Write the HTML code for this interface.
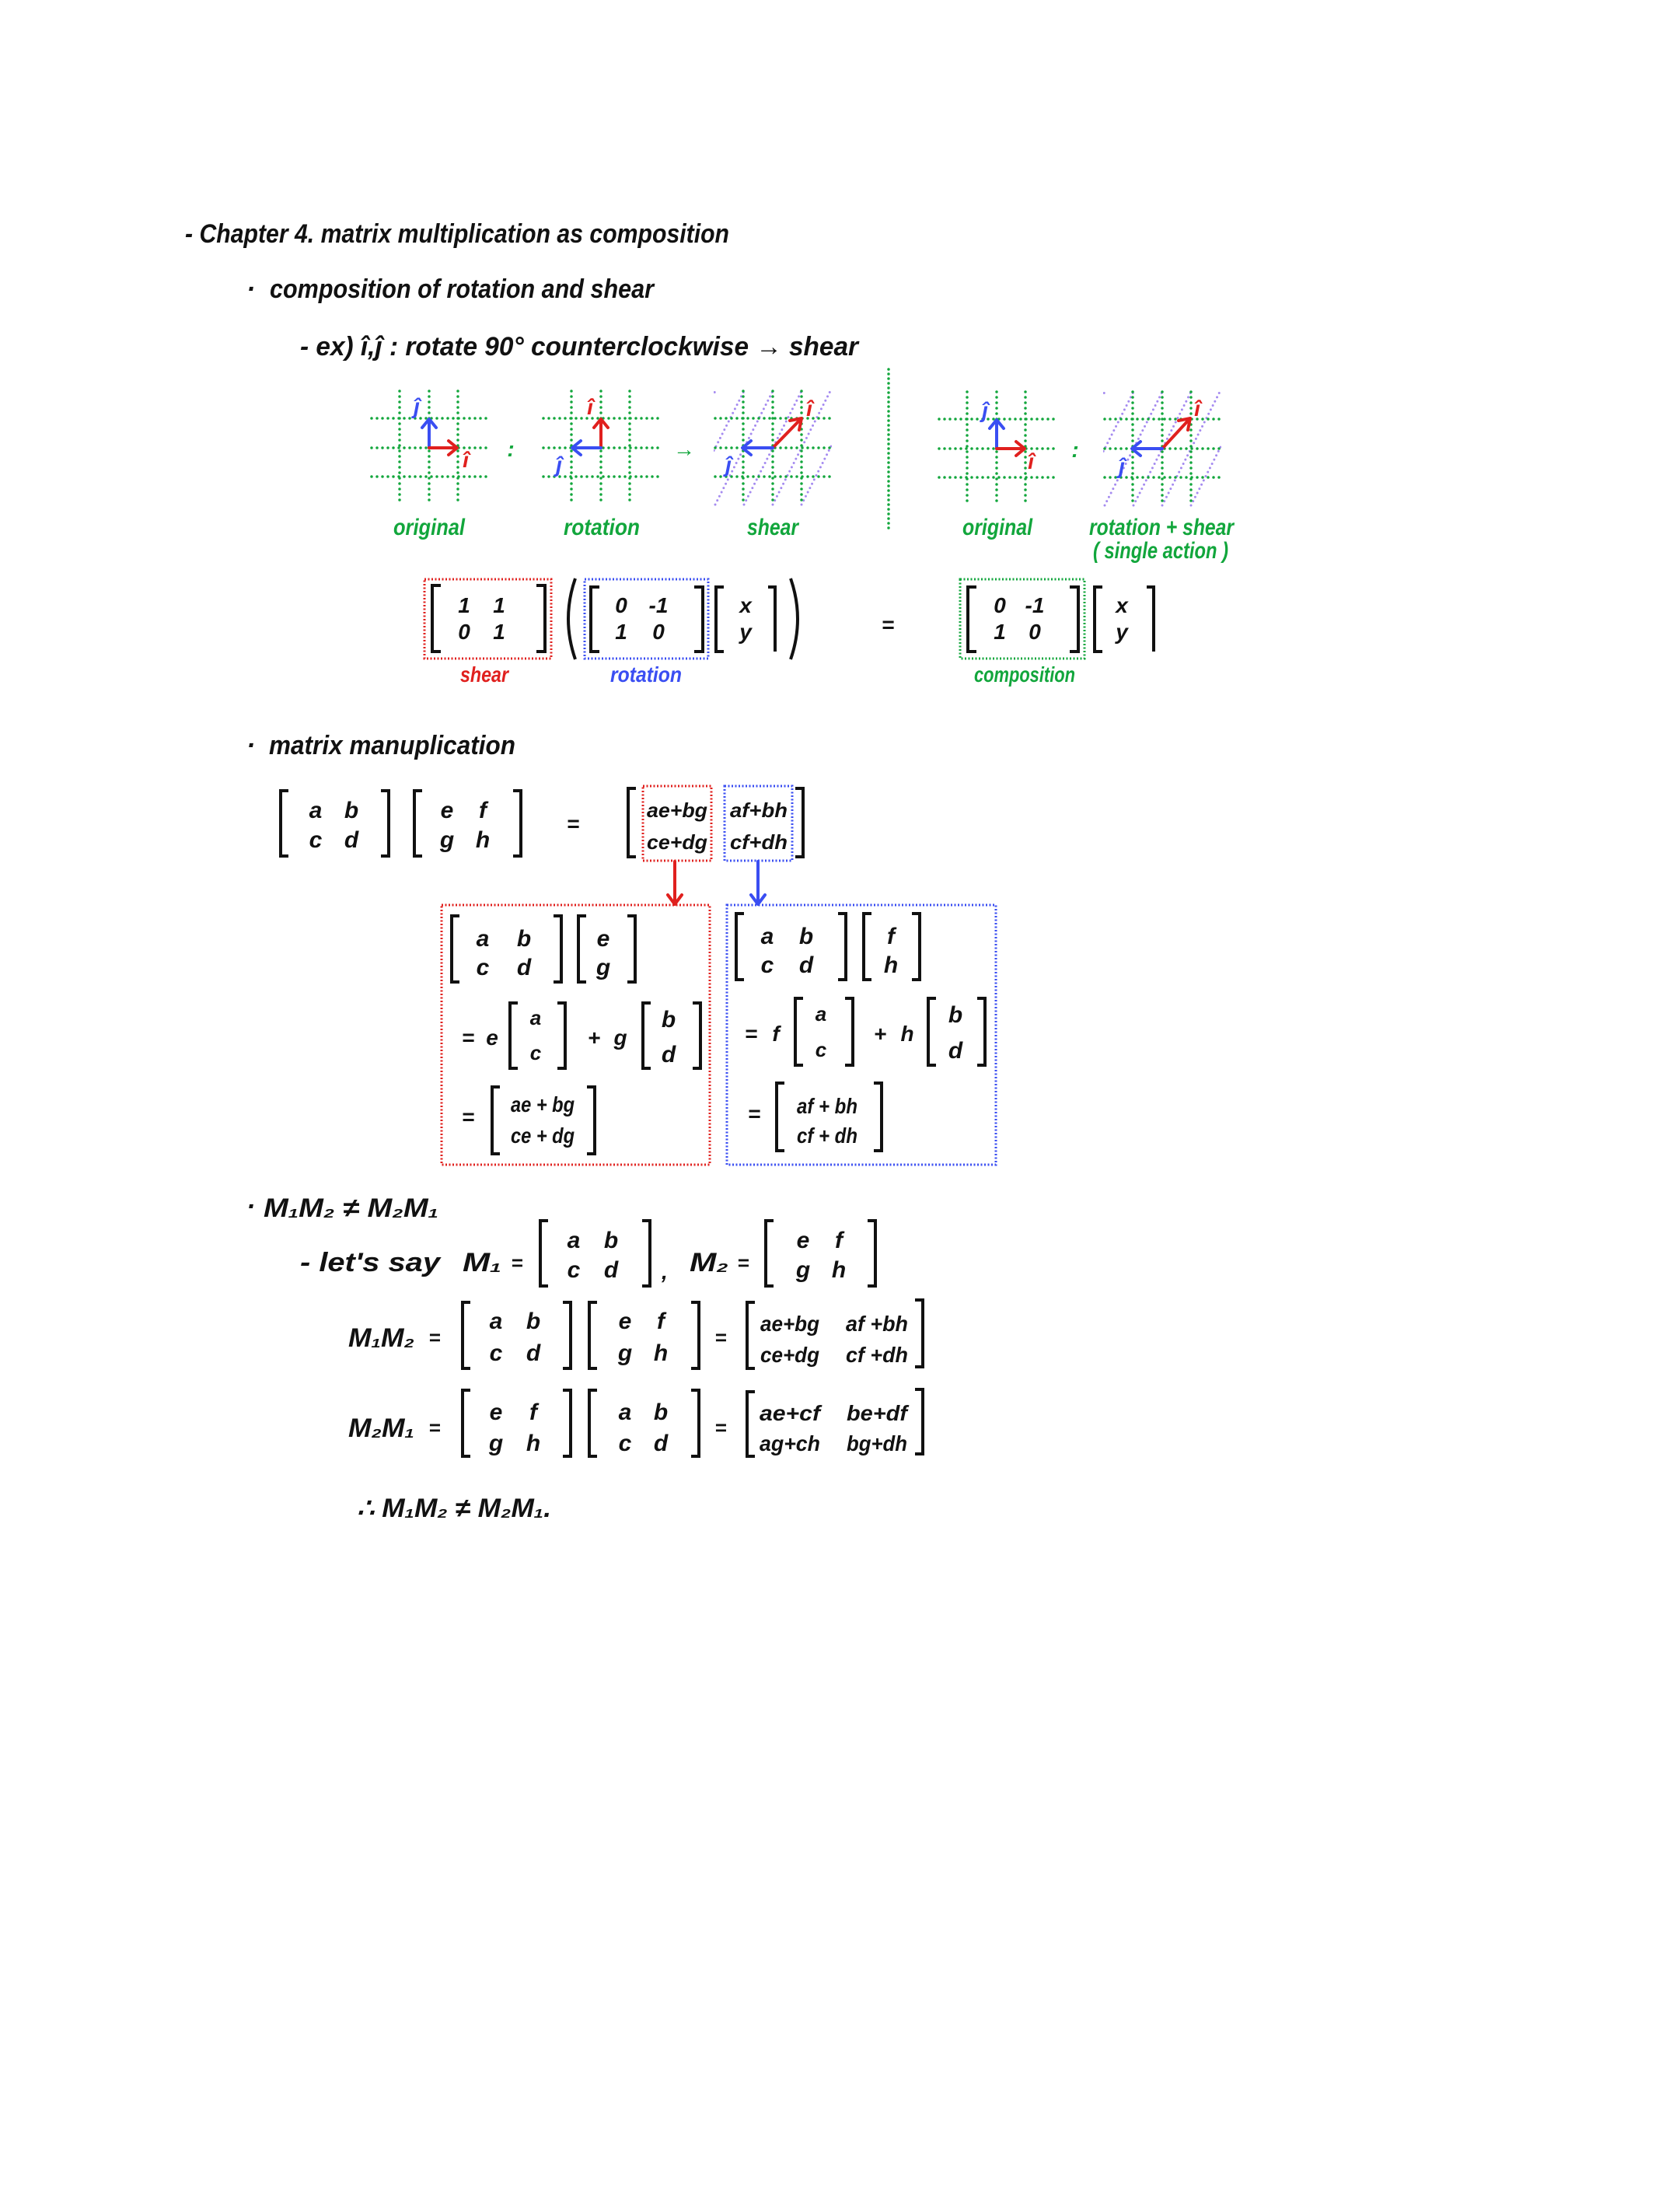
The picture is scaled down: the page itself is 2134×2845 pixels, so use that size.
<!DOCTYPE html>
<html><head><meta charset="utf-8"><style>
html,body{margin:0;padding:0;background:#fff}
svg{display:block}
text{font-family:"Liberation Sans",sans-serif;font-style:italic;font-weight:bold}
.k{fill:#111}
.g{fill:#12a63c}.r{fill:#e0201e}.b{fill:#3a4ef2}
.br{fill:none;stroke:#111;stroke-width:4;stroke-linejoin:miter}
.gl{stroke:#12a63c;stroke-width:3.5;stroke-linecap:round;stroke-dasharray:0 7;fill:none}
.pl{stroke:#a58bf0;stroke-width:3;stroke-linecap:round;stroke-dasharray:0 6;fill:none}
.dr{fill:none;stroke:#e0201e;stroke-width:3;stroke-dasharray:2 2.5}
.db{fill:none;stroke:#3a4ef2;stroke-width:3;stroke-dasharray:2 2.5}
.dg{fill:none;stroke:#12a63c;stroke-width:3;stroke-dasharray:2 2.5}
.ar{fill:none;stroke:#e0201e;stroke-width:4;stroke-linecap:round;stroke-linejoin:round}
.ab{fill:none;stroke:#3a4ef2;stroke-width:4;stroke-linecap:round;stroke-linejoin:round}
</style></head><body>
<svg width="2134" height="2845" viewBox="0 0 2134 2845" xmlns="http://www.w3.org/2000/svg">
<defs>
<g id="grid">
<path class="gl" d="M-38 -73V73M0 -73V73M37 -73V73M-74 -38H74M-74 0H74M-74 37H74"/>
</g>
<clipPath id="cp"><rect x="-76" y="-75" width="152" height="150"/></clipPath>
<g id="diag" clip-path="url(#cp)">
<path class="pl" d="M-148 73L-74 -73M-111 73L-37 -73M-74 73L0 -73M-37 73L37 -73M0 73L74 -73M37 73L111 -73"/>
</g>
</defs>

<!-- header text -->
<text class="k" x="238" y="312" font-size="34" textLength="700" lengthAdjust="spacingAndGlyphs">- Chapter 4. matrix multiplication as composition</text>
<text class="k" x="317" y="383" font-size="34">·</text>
<text class="k" x="347" y="383" font-size="34" textLength="494" lengthAdjust="spacingAndGlyphs">composition of rotation and shear</text>
<text class="k" x="386" y="457" font-size="34" textLength="718" lengthAdjust="spacingAndGlyphs">- ex) î,ĵ : rotate 90° counterclockwise → shear</text>

<!-- grid 1 original -->
<g transform="translate(552,576)">
<use href="#grid"/>
<path class="ab" d="M0 0V-36M-9 -26L0 -37L9 -26"/>
<path class="ar" d="M0 0H35M25 -9L36 0L25 9"/>
</g>
<text class="b" x="536" y="532" font-size="28" text-anchor="middle">ĵ</text>
<text class="r" x="599" y="601" font-size="28" text-anchor="middle">î</text>
<text class="g" x="657" y="587" font-size="28" text-anchor="middle">:</text>
<!-- grid 2 rotation -->
<g transform="translate(773,576)">
<use href="#grid"/>
<path class="ar" d="M0 0V-36M-9 -26L0 -37L9 -26"/>
<path class="ab" d="M0 0H-36M-26 -9L-37 0L-26 9"/>
</g>
<text class="r" x="759" y="533" font-size="28" text-anchor="middle">î</text>
<text class="b" x="719" y="607" font-size="28" text-anchor="middle">ĵ</text>
<text class="g" x="880" y="587" font-size="28" text-anchor="middle">→</text>
<!-- grid 3 shear -->
<g transform="translate(994,576)">
<use href="#diag"/><use href="#grid"/>
<path class="ar" d="M0 0L36 -37M22 -35L37 -38L34 -23"/>
<path class="ab" d="M0 0H-38M-28 -9L-39 0L-28 9"/>
</g>
<text class="r" x="1041" y="535" font-size="28" text-anchor="middle">î</text>
<text class="b" x="937" y="607" font-size="28" text-anchor="middle">ĵ</text>
<!-- divider -->
<path class="gl" d="M1143 475V685" style="stroke-dasharray:0 6"/>
<!-- grid 4 original -->
<g transform="translate(1282,577)">
<use href="#grid"/>
<path class="ab" d="M0 0V-36M-9 -26L0 -37L9 -26"/>
<path class="ar" d="M0 0H35M25 -9L36 0L25 9"/>
</g>
<text class="b" x="1267" y="537" font-size="28" text-anchor="middle">ĵ</text>
<text class="r" x="1326" y="603" font-size="28" text-anchor="middle">î</text>
<text class="g" x="1383" y="588" font-size="28" text-anchor="middle">:</text>
<!-- grid 5 rotation+shear -->
<g transform="translate(1495,577)">
<use href="#diag"/><use href="#grid"/>
<path class="ar" d="M0 0L35 -38M21 -36L36 -39L33 -24"/>
<path class="ab" d="M0 0H-38M-28 -9L-39 0L-28 9"/>
</g>
<text class="r" x="1540" y="535" font-size="28" text-anchor="middle">î</text>
<text class="b" x="1443" y="609" font-size="28" text-anchor="middle">ĵ</text>

<!-- green labels -->
<text class="g" x="552" y="688" font-size="30" text-anchor="middle" textLength="92" lengthAdjust="spacingAndGlyphs">original</text>
<text class="g" x="774" y="688" font-size="30" text-anchor="middle" textLength="98" lengthAdjust="spacingAndGlyphs">rotation</text>
<text class="g" x="994" y="688" font-size="30" text-anchor="middle" textLength="66" lengthAdjust="spacingAndGlyphs">shear</text>
<text class="g" x="1283" y="688" font-size="30" text-anchor="middle" textLength="90" lengthAdjust="spacingAndGlyphs">original</text>
<text class="g" x="1494" y="688" font-size="30" text-anchor="middle" textLength="186" lengthAdjust="spacingAndGlyphs">rotation + shear</text>
<text class="g" x="1493" y="718" font-size="30" text-anchor="middle" textLength="174" lengthAdjust="spacingAndGlyphs">( single action )</text>

<!-- composition equation -->
<rect class="dr" x="546" y="745" width="163" height="102"/>
<path class="br" d="M567 753H556V838H567M690 753H701V838H690"/>
<text class="k" font-size="28" text-anchor="middle"><tspan x="597" y="788">1</tspan><tspan x="642" y="788">1</tspan><tspan x="597" y="822">0</tspan><tspan x="642" y="822">1</tspan></text>
<path class="br" d="M740 744Q722 796 740 848"/>
<rect class="db" x="752" y="745" width="159" height="102"/>
<path class="br" d="M771 755H760V838H771M893 755H904V838H893"/>
<text class="k" font-size="28" text-anchor="middle"><tspan x="799" y="788">0</tspan><tspan x="847" y="788">-1</tspan><tspan x="799" y="822">1</tspan><tspan x="847" y="822">0</tspan></text>
<path class="br" d="M931 755H921V838H931M988 755H997V838"/>
<text class="k" font-size="28" text-anchor="middle"><tspan x="959" y="788">x</tspan><tspan x="959" y="822">y</tspan></text>
<path class="br" d="M1017 744Q1035 796 1017 848"/>
<text class="k" x="1142" y="813" font-size="28" text-anchor="middle">=</text>
<rect class="dg" x="1235" y="745" width="160" height="102"/>
<path class="br" d="M1256 755H1245V838H1256M1376 755H1387V838H1376"/>
<text class="k" font-size="28" text-anchor="middle"><tspan x="1286" y="788">0</tspan><tspan x="1331" y="788">-1</tspan><tspan x="1286" y="822">1</tspan><tspan x="1331" y="822">0</tspan></text>
<path class="br" d="M1418 755H1408V838H1418M1475 755H1484V838"/>
<text class="k" font-size="28" text-anchor="middle"><tspan x="1443" y="788">x</tspan><tspan x="1443" y="822">y</tspan></text>
<text class="r" x="623" y="877" font-size="28" text-anchor="middle" textLength="62" lengthAdjust="spacingAndGlyphs">shear</text>
<text class="b" x="831" y="877" font-size="28" text-anchor="middle" textLength="92" lengthAdjust="spacingAndGlyphs">rotation</text>
<text class="g" x="1318" y="877" font-size="28" text-anchor="middle" textLength="130" lengthAdjust="spacingAndGlyphs">composition</text>

<!-- matrix multiplication -->
<text class="k" x="317" y="970" font-size="34">·</text>
<text class="k" x="346" y="970" font-size="34" textLength="317" lengthAdjust="spacingAndGlyphs">matrix manuplication</text>
<path class="br" d="M371 1017H361V1101H371M490 1017H500V1101H490"/>
<text class="k" font-size="30" text-anchor="middle"><tspan x="406" y="1052">a</tspan><tspan x="452" y="1052">b</tspan><tspan x="406" y="1090">c</tspan><tspan x="452" y="1090">d</tspan></text>
<path class="br" d="M543 1017H533V1101H543M660 1017H670V1101H660"/>
<text class="k" font-size="30" text-anchor="middle"><tspan x="575" y="1052">e</tspan><tspan x="621" y="1052">f</tspan><tspan x="575" y="1090">g</tspan><tspan x="621" y="1090">h</tspan></text>
<text class="k" x="737" y="1069" font-size="28" text-anchor="middle">=</text>
<path class="br" d="M818 1014H808V1102H818M1023 1014H1033V1102H1023"/>
<rect class="dr" x="827" y="1011" width="88" height="96"/>
<rect class="db" x="932" y="1011" width="87" height="96"/>
<text class="k" font-size="26" text-anchor="middle"><tspan x="871" y="1051" textLength="78" lengthAdjust="spacingAndGlyphs">ae+bg</tspan><tspan x="871" y="1092" textLength="78" lengthAdjust="spacingAndGlyphs">ce+dg</tspan><tspan x="976" y="1051" textLength="74" lengthAdjust="spacingAndGlyphs">af+bh</tspan><tspan x="976" y="1092" textLength="74" lengthAdjust="spacingAndGlyphs">cf+dh</tspan></text>
<path class="ar" d="M868 1108V1162M859 1151L868 1163L877 1151"/>
<path class="ab" d="M975 1108V1162M966 1151L975 1163L984 1151"/>

<!-- red box -->
<rect class="dr" x="568" y="1164" width="345" height="334"/>
<path class="br" d="M591 1178H581V1263H591M712 1178H722V1263H712"/>
<text class="k" font-size="30" text-anchor="middle"><tspan x="621" y="1217">a</tspan><tspan x="674" y="1217">b</tspan><tspan x="621" y="1254">c</tspan><tspan x="674" y="1254">d</tspan></text>
<path class="br" d="M754 1178H744V1263H754M807 1178H817V1263H807"/>
<text class="k" font-size="30" text-anchor="middle"><tspan x="776" y="1217">e</tspan><tspan x="776" y="1254">g</tspan></text>
<text class="k" font-size="28" text-anchor="middle"><tspan x="602" y="1344">=</tspan><tspan x="633" y="1344">e</tspan><tspan x="764" y="1344">+</tspan><tspan x="798" y="1344">g</tspan></text>
<path class="br" d="M666 1290H656V1374H666M717 1290H727V1374H717"/>
<text class="k" font-size="26" text-anchor="middle"><tspan x="689" y="1318">a</tspan><tspan x="689" y="1363">c</tspan></text>
<path class="br" d="M837 1290H827V1374H837M891 1290H901V1374H891"/>
<text class="k" font-size="30" text-anchor="middle"><tspan x="860" y="1321">b</tspan><tspan x="860" y="1366">d</tspan></text>
<text class="k" x="602" y="1446" font-size="28" text-anchor="middle">=</text>
<path class="br" d="M643 1398H633V1484H643M755 1398H765V1484H755"/>
<text class="k" font-size="28" text-anchor="middle"><tspan x="698" y="1430" textLength="82" lengthAdjust="spacingAndGlyphs">ae + bg</tspan><tspan x="698" y="1470" textLength="82" lengthAdjust="spacingAndGlyphs">ce + dg</tspan></text>

<!-- blue box -->
<rect class="db" x="935" y="1164" width="346" height="334"/>
<path class="br" d="M957 1175H947V1260H957M1078 1175H1088V1260H1078"/>
<text class="k" font-size="30" text-anchor="middle"><tspan x="987" y="1214">a</tspan><tspan x="1037" y="1214">b</tspan><tspan x="987" y="1251">c</tspan><tspan x="1037" y="1251">d</tspan></text>
<path class="br" d="M1121 1175H1111V1260H1121M1173 1175H1183V1260H1173"/>
<text class="k" font-size="30" text-anchor="middle"><tspan x="1146" y="1214">f</tspan><tspan x="1146" y="1251">h</tspan></text>
<text class="k" font-size="28" text-anchor="middle"><tspan x="966" y="1339">=</tspan><tspan x="998" y="1339">f</tspan><tspan x="1132" y="1339">+</tspan><tspan x="1167" y="1339">h</tspan></text>
<path class="br" d="M1033 1284H1023V1370H1033M1087 1284H1097V1370H1087"/>
<text class="k" font-size="26" text-anchor="middle"><tspan x="1056" y="1313">a</tspan><tspan x="1056" y="1359">c</tspan></text>
<path class="br" d="M1204 1284H1194V1370H1204M1257 1284H1267V1370H1257"/>
<text class="k" font-size="30" text-anchor="middle"><tspan x="1229" y="1315">b</tspan><tspan x="1229" y="1361">d</tspan></text>
<text class="k" x="970" y="1442" font-size="28" text-anchor="middle">=</text>
<path class="br" d="M1009 1393H999V1480H1009M1124 1393H1134V1480H1124"/>
<text class="k" font-size="28" text-anchor="middle"><tspan x="1064" y="1432" textLength="78" lengthAdjust="spacingAndGlyphs">af + bh</tspan><tspan x="1064" y="1470" textLength="78" lengthAdjust="spacingAndGlyphs">cf + dh</tspan></text>

<!-- M1M2 != M2M1 -->
<text class="k" x="317" y="1563" font-size="34">·</text>
<text class="k" x="339" y="1565" font-size="34" textLength="225" lengthAdjust="spacingAndGlyphs">M₁M₂ ≠ M₂M₁</text>
<text class="k" x="386" y="1635" font-size="34" textLength="180" lengthAdjust="spacingAndGlyphs">- let's  say</text>
<text class="k" x="595" y="1635" font-size="34" textLength="50" lengthAdjust="spacingAndGlyphs">M₁</text>
<text class="k" x="665" y="1633" font-size="26" text-anchor="middle">=</text>
<path class="br" d="M705 1570H695V1654H705M826 1570H836V1654H826"/>
<text class="k" font-size="30" text-anchor="middle"><tspan x="738" y="1605">a</tspan><tspan x="786" y="1605">b</tspan><tspan x="738" y="1643">c</tspan><tspan x="786" y="1643">d</tspan></text>
<text class="k" x="851" y="1645" font-size="28">,</text>
<text class="k" x="887" y="1635" font-size="34" textLength="50" lengthAdjust="spacingAndGlyphs">M₂</text>
<text class="k" x="956" y="1633" font-size="26" text-anchor="middle">=</text>
<path class="br" d="M995 1570H985V1654H995M1116 1570H1126V1654H1116"/>
<text class="k" font-size="30" text-anchor="middle"><tspan x="1033" y="1605">e</tspan><tspan x="1079" y="1605">f</tspan><tspan x="1033" y="1643">g</tspan><tspan x="1079" y="1643">h</tspan></text>

<!-- M1M2 row -->
<text class="k" x="448" y="1732" font-size="34" textLength="85" lengthAdjust="spacingAndGlyphs">M₁M₂</text>
<text class="k" x="559" y="1729" font-size="26" text-anchor="middle">=</text>
<path class="br" d="M605 1675H595V1760H605M724 1675H734V1760H724"/>
<text class="k" font-size="30" text-anchor="middle"><tspan x="638" y="1709">a</tspan><tspan x="686" y="1709">b</tspan><tspan x="638" y="1750">c</tspan><tspan x="686" y="1750">d</tspan></text>
<path class="br" d="M768 1675H758V1760H768M889 1675H899V1760H889"/>
<text class="k" font-size="30" text-anchor="middle"><tspan x="804" y="1709">e</tspan><tspan x="850" y="1709">f</tspan><tspan x="804" y="1750">g</tspan><tspan x="850" y="1750">h</tspan></text>
<text class="k" x="927" y="1729" font-size="26" text-anchor="middle">=</text>
<path class="br" d="M971 1675H961V1760H971M1177 1672H1187V1758H1177"/>
<text class="k" font-size="28" text-anchor="middle"><tspan x="1016" y="1712" textLength="76" lengthAdjust="spacingAndGlyphs">ae+bg</tspan><tspan x="1016" y="1752" textLength="76" lengthAdjust="spacingAndGlyphs">ce+dg</tspan><tspan x="1128" y="1712" textLength="80" lengthAdjust="spacingAndGlyphs">af +bh</tspan><tspan x="1128" y="1752" textLength="80" lengthAdjust="spacingAndGlyphs">cf +dh</tspan></text>

<!-- M2M1 row -->
<text class="k" x="448" y="1848" font-size="34" textLength="85" lengthAdjust="spacingAndGlyphs">M₂M₁</text>
<text class="k" x="559" y="1845" font-size="26" text-anchor="middle">=</text>
<path class="br" d="M605 1788H595V1873H605M724 1788H734V1873H724"/>
<text class="k" font-size="30" text-anchor="middle"><tspan x="638" y="1826">e</tspan><tspan x="686" y="1826">f</tspan><tspan x="638" y="1866">g</tspan><tspan x="686" y="1866">h</tspan></text>
<path class="br" d="M768 1788H758V1873H768M889 1788H899V1873H889"/>
<text class="k" font-size="30" text-anchor="middle"><tspan x="804" y="1826">a</tspan><tspan x="850" y="1826">b</tspan><tspan x="804" y="1866">c</tspan><tspan x="850" y="1866">d</tspan></text>
<text class="k" x="927" y="1845" font-size="26" text-anchor="middle">=</text>
<path class="br" d="M971 1790H961V1873H971M1177 1787H1187V1870H1177"/>
<text class="k" font-size="28" text-anchor="middle"><tspan x="1016" y="1827" textLength="78" lengthAdjust="spacingAndGlyphs">ae+cf</tspan><tspan x="1016" y="1866" textLength="78" lengthAdjust="spacingAndGlyphs">ag+ch</tspan><tspan x="1128" y="1827" textLength="78" lengthAdjust="spacingAndGlyphs">be+df</tspan><tspan x="1128" y="1866" textLength="78" lengthAdjust="spacingAndGlyphs">bg+dh</tspan></text>

<text class="k" x="459" y="1951" font-size="34" textLength="250" lengthAdjust="spacingAndGlyphs">∴ M₁M₂ ≠ M₂M₁.</text>
</svg>
</body></html>
